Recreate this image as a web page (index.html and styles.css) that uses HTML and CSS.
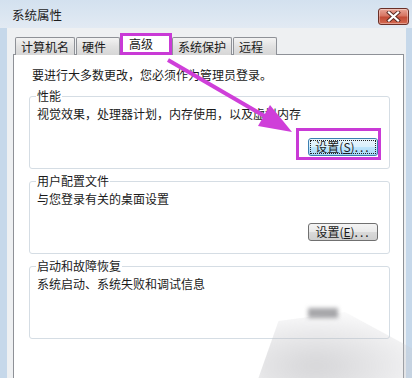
FILE: index.html
```html
<!DOCTYPE html>
<html lang="zh-CN">
<head>
  <meta charset="UTF-8" />
  <title>系统属性</title>
  <link rel="stylesheet" href="styles.css">
</head>
<body>
  <div class="window">
    <!-- Title Bar -->
    <div class="titlebar">
      <span class="title">系统属性</span>
      <button class="close" aria-label="关闭">
        <svg width="15" height="11" viewBox="0 0 15 11">
          <path d="M3 1.5 L12 9.5 M12 1.5 L3 9.5" stroke="#5a2a22" stroke-width="4" stroke-linecap="square"/>
          <path d="M3 1.5 L12 9.5 M12 1.5 L3 9.5" stroke="#ffffff" stroke-width="2.2" stroke-linecap="square"/>
        </svg>
      </button>
    </div>

    <!-- Dialog Body -->
    <div class="client">
      <div class="tabs">
        <div class="tab">计算机名</div>
        <div class="tab">硬件</div>
        <div class="tab active">高级</div>
        <div class="tab">系统保护</div>
        <div class="tab">远程</div>
      </div>

      <div class="panel">
        <p class="note">要进行大多数更改，您必须作为管理员登录。</p>

        <fieldset class="group">
          <legend>性能</legend>
          <p>视觉效果，处理器计划，内存使用，以及虚拟内存</p>
          <div class="actions">
            <button class="btn focused"><span class="focus-ring">设置(<u>S</u>)<span class="dots">...</span></span></button>
          </div>
        </fieldset>

        <fieldset class="group">
          <legend>用户配置文件</legend>
          <p>与您登录有关的桌面设置</p>
          <div class="actions">
            <button class="btn"><span class="focus-ring">设置(<u>E</u>)<span class="dots">...</span></span></button>
          </div>
        </fieldset>

        <fieldset class="group">
          <legend>启动和故障恢复</legend>
          <p>系统启动、系统失败和调试信息</p>
        </fieldset>
      </div>
    </div>

    <!-- Annotation overlay -->
    <svg class="annot" width="412" height="378" viewBox="0 0 412 378">
      <rect x="121.5" y="34.5" width="49" height="19" fill="none" stroke="#c93ad6" stroke-width="3"/>
      <rect x="297.5" y="129.5" width="82" height="29" fill="none" stroke="#c93ad6" stroke-width="3"/>
      <line x1="168" y1="60" x2="266" y2="117" stroke="#cf3fd9" stroke-width="4"/>
      <polygon points="292,132 270,105 258,126" fill="#cf3fd9"/>
    </svg>

    <div class="smudge"></div>
    <div class="smudge-dark"></div>
  </div>
</body>
</html>
```

FILE: styles.css
```css
/* Global Reset */
* {
  margin: 0;
  padding: 0;
  box-sizing: border-box;
}
body {
  font-family: "Noto Sans CJK SC", "Liberation Sans", sans-serif;
  font-size: 12px;
  color: #1a1a1a;
  background: #f0f0f0;
  width: 412px;
  height: 378px;
  overflow: hidden;
}
.window {
  position: relative;
  width: 412px;
  height: 378px;
  background: #c6d8ea;
  display: flex;
  flex-direction: column;
  overflow: hidden;
}
/* Title Bar */
.titlebar {
  height: 28px;
  display: flex;
  align-items: flex-start;
  justify-content: space-between;
  padding: 8px 3px 0 12px;
  background: linear-gradient(to bottom, #d3e1ef, #e2eaf3);
}
.title {
  line-height: 14px;
  font-size: 12.5px;
  color: #1c1c1c;
}
.close {
  width: 31px;
  height: 17px;
  border: 1px solid #6a2f27;
  border-radius: 3px;
  background: linear-gradient(to bottom, #e8a597 0%, #d77563 45%, #c24b36 55%, #d46a52 100%);
  display: flex;
  align-items: center;
  justify-content: center;
  box-shadow: inset 0 0 0 1px rgba(255,255,255,0.35);
}
/* Client Area */
.client {
  flex: 1;
  margin: 0 6px 0 7px;
  background: #eef0f2;
  display: flex;
  flex-direction: column;
}
.tabs {
  display: flex;
  align-items: flex-end;
  gap: 1px;
  margin: 6px 0 -1px 8px;
  position: relative;
  z-index: 2;
}
.tab {
  height: 18px;
  min-width: 44px;
  padding: 0 5px;
  line-height: 17px;
  border: 1px solid #8e9197;
  border-bottom: none;
  background: linear-gradient(to bottom, #f3f3f3, #e1e1e1 50%, #d6d6d6);
  border-radius: 2px 2px 0 0;
}
.tab.active {
  height: 21px;
  width: 52px;
  margin: 0 -1px;
  padding: 0 0 0 8px;
  line-height: 18px;
  background: #fff;
}
/* Panel */
.panel {
  flex: 1;
  margin: 0 2px 0 6px;
  background: #fff;
  border: 1px solid #8e9197;
  border-bottom: none;
  padding: 13px 0 0 18px;
}
.note {
  line-height: 14px;
}
.group {
  height: 80px;
  margin: 7px 13px 0 -3px;
  padding: 0 11px 0 6px;
  border: 1px solid #d5dde4;
  border-radius: 3px;
}
.group + .group {
  margin-top: 5px;
}
.group legend {
  padding: 0 1px;
  line-height: 14px;
}
.group p {
  margin-top: 4px;
  padding-left: 1px;
  line-height: 14px;
}
.actions {
  display: flex;
  justify-content: flex-end;
  margin-top: 17px;
}
/* Buttons */
.btn {
  width: 70px;
  height: 18px;
  font-family: inherit;
  font-size: 12px;
  color: #1a1a1a;
  border: 1px solid #707070;
  border-radius: 3px;
  background: linear-gradient(to bottom, #f4f4f4 0%, #e9e9e9 50%, #dadada 51%, #cfcfcf 100%);
  display: flex;
  align-items: center;
  justify-content: center;
  padding: 1px;
}
.btn.focused {
  border-color: #3c7fb1;
  background: linear-gradient(to bottom, #e8f5fc 0%, #d9f0fc 50%, #bee6fd 51%, #a7d9f5 100%);
}
.focus-ring {
  display: block;
  width: 100%;
  height: 100%;
  line-height: 14px;
  text-align: center;
}
.btn.focused .focus-ring {
  outline: 1px dotted #222;
  outline-offset: -1px;
}
.dots {
  letter-spacing: 2px;
}
/* Annotations */
.annot {
  position: absolute;
  top: 0;
  left: 0;
  pointer-events: none;
  z-index: 5;
}
.smudge {
  position: absolute;
  left: 250px;
  top: 312px;
  width: 190px;
  height: 90px;
  background: radial-gradient(ellipse at 35% 60%, rgba(170,170,175,0.5), rgba(200,200,205,0.28) 55%, rgba(240,240,240,0) 80%);
  clip-path: polygon(15% 10%, 50% 0, 85% 40%, 100% 100%, 0 100%);
  filter: blur(8px);
  z-index: 4;
}
.smudge-dark {
  position: absolute;
  left: 308px;
  top: 308px;
  width: 30px;
  height: 10px;
  background: rgba(120,120,125,0.65);
  filter: blur(2px);
  z-index: 4;
}
```
